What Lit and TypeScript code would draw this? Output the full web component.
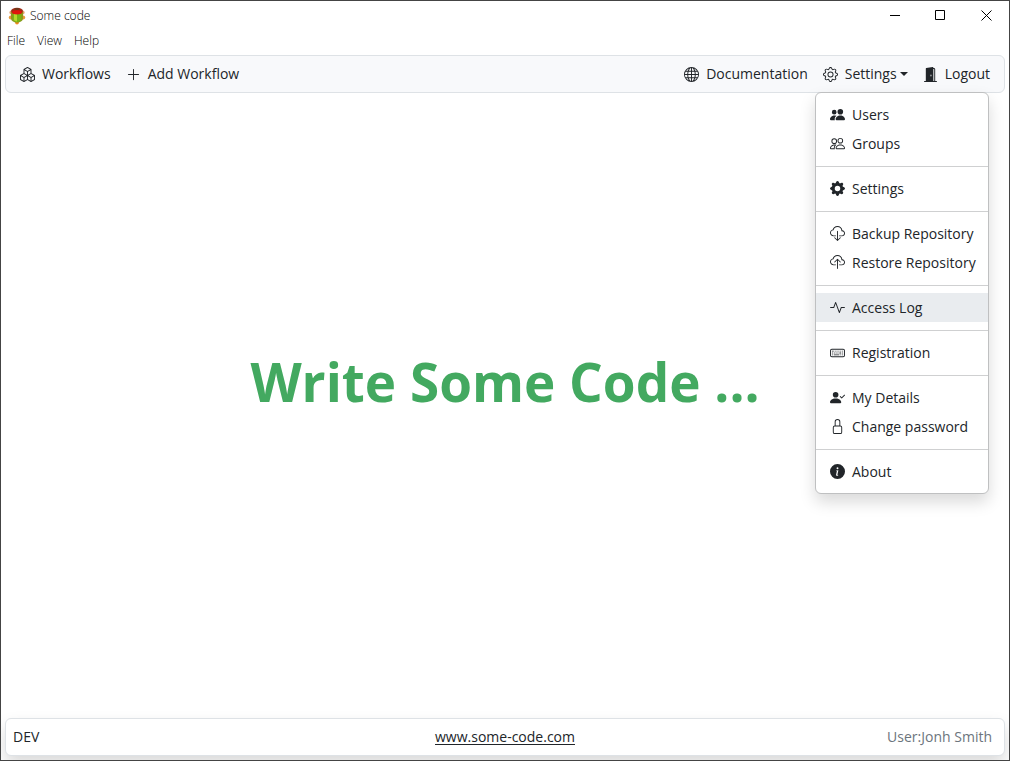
import { LitElement, html, svg, css, nothing } from "lit";
import { customElement, state } from "lit/decorators.js";
import { classMap } from "lit/directives/class-map.js";

const ICONS: Record<string, string[]> = {
  boxes: [
    "M7.752.066a.5.5 0 0 1 .496 0l3.75 2.143a.5.5 0 0 1 .252.434v3.995l3.498 2A.5.5 0 0 1 16 9.07v4.286a.5.5 0 0 1-.252.434l-3.75 2.143a.5.5 0 0 1-.496 0l-3.502-2-3.502 2.001a.5.5 0 0 1-.496 0l-3.75-2.143A.5.5 0 0 1 0 13.357V9.071a.5.5 0 0 1 .252-.434L3.75 6.638V2.643a.5.5 0 0 1 .252-.434L7.752.066ZM4.25 7.504 1.508 9.071l2.742 1.567 2.742-1.567L4.25 7.504ZM7.5 9.933l-2.75 1.571v3.134l2.75-1.571V9.933Zm1 3.134 2.75 1.571v-3.134L8.5 9.933v3.134Zm.508-3.996 2.742 1.567 2.742-1.567-2.742-1.567-2.742 1.567Zm2.242-2.433V3.504L8.5 5.076V8.21l2.75-1.572ZM7.5 8.21V5.076L4.75 3.504v3.134L7.5 8.21ZM5.258 2.643 8 4.21l2.742-1.567L8 1.076 5.258 2.643ZM15 9.933l-2.75 1.571v3.134L15 13.067V9.933ZM3.75 14.638v-3.134L1 9.933v3.134l2.75 1.571Z",
  ],
  plus: ["M8 2a.5.5 0 0 1 .5.5v5h5a.5.5 0 0 1 0 1h-5v5a.5.5 0 0 1-1 0v-5h-5a.5.5 0 0 1 0-1h5v-5A.5.5 0 0 1 8 2Z"],
  globe: [
    "M0 8a8 8 0 1 1 16 0A8 8 0 0 1 0 8zm7.5-6.923c-.67.204-1.335.82-1.887 1.855A7.97 7.97 0 0 0 5.145 4H7.5V1.077zM4.09 4a9.267 9.267 0 0 1 .64-1.539 6.7 6.7 0 0 1 .597-.933A7.025 7.025 0 0 0 2.255 4H4.09zm-.582 3.5c.03-.877.138-1.718.312-2.5H1.674a6.958 6.958 0 0 0-.656 2.5h2.49zM4.847 5a12.5 12.5 0 0 0-.338 2.5H7.5V5H4.847zM8.5 5v2.5h2.99a12.495 12.495 0 0 0-.337-2.5H8.5zM4.51 8.5a12.5 12.5 0 0 0 .337 2.5H7.5V8.5H4.51zm3.99 0V11h2.653c.187-.765.306-1.608.338-2.5H8.5zM5.145 12c.138.386.295.744.468 1.068.552 1.035 1.218 1.65 1.887 1.855V12H5.145zm.182 2.472a6.696 6.696 0 0 1-.597-.933A9.268 9.268 0 0 1 4.09 12H2.255a7.024 7.024 0 0 0 3.072 2.472zM3.82 11a13.652 13.652 0 0 1-.312-2.5h-2.49c.062.89.291 1.733.656 2.5H3.82zm6.853 3.472A7.024 7.024 0 0 0 13.745 12H11.91a9.27 9.27 0 0 1-.64 1.539 6.688 6.688 0 0 1-.597.933zM8.5 12v2.923c.67-.204 1.335-.82 1.887-1.855.173-.324.33-.682.468-1.068H8.5zm3.68-1h2.146c.365-.767.594-1.61.656-2.5h-2.49a13.65 13.65 0 0 1-.312 2.5zm2.802-3.5a6.959 6.959 0 0 0-.656-2.5H12.18c.174.782.282 1.623.312 2.5h2.49zM11.27 2.461c.247.464.462.98.64 1.539h1.835a7.024 7.024 0 0 0-3.072-2.472c.218.284.418.598.597.933zM10.855 4a7.966 7.966 0 0 0-.468-1.068C9.835 1.897 9.17 1.282 8.5 1.077V4h2.355z",
  ],
  gear: [
    "M8 4.754a3.246 3.246 0 1 0 0 6.492 3.246 3.246 0 0 0 0-6.492zM5.754 8a2.246 2.246 0 1 1 4.492 0 2.246 2.246 0 0 1-4.492 0z",
    "M9.796 1.343c-.527-1.79-3.065-1.79-3.592 0l-.094.319a.873.873 0 0 1-1.255.52l-.292-.16c-1.64-.892-3.433.902-2.54 2.541l.159.292a.873.873 0 0 1-.52 1.255l-.319.094c-1.79.527-1.79 3.065 0 3.592l.319.094a.873.873 0 0 1 .52 1.255l-.16.292c-.892 1.64.901 3.434 2.541 2.54l.292-.159a.873.873 0 0 1 1.255.52l.094.319c.527 1.79 3.065 1.79 3.592 0l.094-.319a.873.873 0 0 1 1.255-.52l.292.16c1.64.893 3.434-.902 2.54-2.541l-.159-.292a.873.873 0 0 1 .52-1.255l.319-.094c1.79-.527 1.79-3.065 0-3.592l-.319-.094a.873.873 0 0 1-.52-1.255l.16-.292c.893-1.64-.902-3.433-2.541-2.54l-.292.159a.873.873 0 0 1-1.255-.52l-.094-.319zm-2.633.283c.246-.835 1.428-.835 1.674 0l.094.319a1.873 1.873 0 0 0 2.693 1.115l.291-.16c.764-.415 1.6.42 1.184 1.185l-.159.292a1.873 1.873 0 0 0 1.116 2.692l.318.094c.835.246.835 1.428 0 1.674l-.319.094a1.873 1.873 0 0 0-1.115 2.693l.16.291c.415.764-.42 1.6-1.185 1.184l-.291-.159a1.873 1.873 0 0 0-2.693 1.116l-.094.318c-.246.835-1.428.835-1.674 0l-.094-.319a1.873 1.873 0 0 0-2.692-1.115l-.292.16c-.764.415-1.6-.42-1.184-1.185l.159-.291A1.873 1.873 0 0 0 1.945 8.93l-.319-.094c-.835-.246-.835-1.428 0-1.674l.319-.094A1.873 1.873 0 0 0 3.06 4.377l-.16-.292c-.415-.764.42-1.6 1.185-1.184l.292.159a1.873 1.873 0 0 0 2.692-1.115l.094-.319z",
  ],
  door: [
    "M1.5 15a.5.5 0 0 0 0 1h13a.5.5 0 0 0 0-1H13V2.5A1.5 1.5 0 0 0 11.5 1H11V.5a.5.5 0 0 0-.57-.495l-7 1A.5.5 0 0 0 3 1.5V15H1.5zM11 2h.5a.5.5 0 0 1 .5.5V15h-1V2zm-2.5 8c-.276 0-.5-.448-.5-1s.224-1 .5-1 .5.448.5 1-.224 1-.5 1z",
  ],
  peopleFill: [
    "M7 14s-1 0-1-1 1-4 5-4 5 3 5 4-1 1-1 1H7zm4-6a3 3 0 1 0 0-6 3 3 0 0 0 0 6z",
    "M5.216 14A2.238 2.238 0 0 1 5 13c0-1.355.68-2.75 1.936-3.72A6.325 6.325 0 0 0 5 9c-4 0-5 3-5 4s1 1 1 1h4.216zM4.5 8a2.5 2.5 0 1 0 0-5 2.5 2.5 0 0 0 0 5z",
  ],
  people: [
    "M15 14s1 0 1-1-1-4-5-4-5 3-5 4 1 1 1 1h8zm-7.978-1A.261.261 0 0 1 7 12.996c.001-.264.167-1.03.76-1.72C8.312 10.629 9.282 10 11 10c1.717 0 2.687.63 3.24 1.276.593.69.758 1.457.76 1.72l-.008.002a.274.274 0 0 1-.014.002H7.022zM11 7a2 2 0 1 0 0-4 2 2 0 0 0 0 4zm3-2a3 3 0 1 1-6 0 3 3 0 0 1 6 0zM6.936 9.28a5.88 5.88 0 0 0-1.23-.247A7.35 7.35 0 0 0 5 9c-4 0-5 3-5 4 0 .667.333 1 1 1h4.216A2.238 2.238 0 0 1 5 13c0-1.01.377-2.042 1.09-2.904.243-.294.526-.569.846-.816zM4.92 10A5.493 5.493 0 0 0 4 13H1c0-.26.164-1.03.76-1.724.545-.636 1.492-1.256 3.16-1.275zM1.5 5.5a3 3 0 1 1 6 0 3 3 0 0 1-6 0zm3-2a2 2 0 1 0 0 4 2 2 0 0 0 0-4z",
  ],
  gearFill: [
    "M9.405 1.05c-.413-1.4-2.397-1.4-2.81 0l-.1.34a1.464 1.464 0 0 1-2.105.872l-.31-.17c-1.283-.698-2.686.705-1.987 1.987l.169.311c.446.82.023 1.841-.872 2.105l-.34.1c-1.4.413-1.4 2.397 0 2.81l.34.1a1.464 1.464 0 0 1 .872 2.105l-.17.31c-.698 1.283.705 2.686 1.987 1.987l.311-.169a1.464 1.464 0 0 1 2.105.872l.1.34c.413 1.4 2.397 1.4 2.81 0l.1-.34a1.464 1.464 0 0 1 2.105-.872l.31.17c1.283.698 2.686-.705 1.987-1.987l-.169-.311a1.464 1.464 0 0 1 .872-2.105l.34-.1c1.4-.413 1.4-2.397 0-2.81l-.34-.1a1.464 1.464 0 0 1-.872-2.105l.17-.31c.698-1.283-.705-2.686-1.987-1.987l-.311.169a1.464 1.464 0 0 1-2.105-.872l-.1-.34zM8 10.93a2.929 2.929 0 1 1 0-5.86 2.929 2.929 0 0 1 0 5.858z",
  ],
  cloudDown: [
    "M4.406 1.342A5.53 5.53 0 0 1 8 0c2.69 0 4.923 2 5.166 4.579C14.758 4.804 16 6.137 16 7.773 16 9.569 14.502 11 12.687 11H10a.5.5 0 0 1 0-1h2.688C13.979 10 15 8.988 15 7.773c0-1.216-1.02-2.228-2.313-2.228h-.5v-.5C12.188 2.825 10.328 1 8 1a4.53 4.53 0 0 0-2.941 1.1c-.757.652-1.153 1.438-1.153 2.055v.448l-.445.049C2.064 4.805 1 5.952 1 7.318 1 8.785 2.23 10 3.781 10H6a.5.5 0 0 1 0 1H3.781C1.708 11 0 9.366 0 7.318c0-1.763 1.266-3.223 2.942-3.593.143-.863.698-1.723 1.464-2.383z",
    "M7.646 15.854a.5.5 0 0 0 .708 0l3-3a.5.5 0 0 0-.708-.708L8.5 14.293V5.5a.5.5 0 0 0-1 0v8.793l-2.146-2.147a.5.5 0 0 0-.708.708l3 3z",
  ],
  cloudUp: [
    "M4.406 1.342A5.53 5.53 0 0 1 8 0c2.69 0 4.923 2 5.166 4.579C14.758 4.804 16 6.137 16 7.773 16 9.569 14.502 11 12.687 11H10a.5.5 0 0 1 0-1h2.688C13.979 10 15 8.988 15 7.773c0-1.216-1.02-2.228-2.313-2.228h-.5v-.5C12.188 2.825 10.328 1 8 1a4.53 4.53 0 0 0-2.941 1.1c-.757.652-1.153 1.438-1.153 2.055v.448l-.445.049C2.064 4.805 1 5.952 1 7.318 1 8.785 2.23 10 3.781 10H6a.5.5 0 0 1 0 1H3.781C1.708 11 0 9.366 0 7.318c0-1.763 1.266-3.223 2.942-3.593.143-.863.698-1.723 1.464-2.383z",
    "M7.646 4.146a.5.5 0 0 1 .708 0l3 3a.5.5 0 0 1-.708.708L8.5 5.707V14.5a.5.5 0 0 1-1 0V5.707L5.354 7.854a.5.5 0 1 1-.708-.708l3-3z",
  ],
  activity: [
    "M6 2a.5.5 0 0 1 .47.33L10 12.036l1.53-4.208A.5.5 0 0 1 12 7.5h3.5a.5.5 0 0 1 0 1h-3.15l-1.88 5.17a.5.5 0 0 1-.94 0L6 3.964 4.47 8.171A.5.5 0 0 1 4 8.5H.5a.5.5 0 0 1 0-1h3.15l1.88-5.17A.5.5 0 0 1 6 2Z",
  ],
  keyboard: [
    "M14 5a1 1 0 0 1 1 1v5a1 1 0 0 1-1 1H2a1 1 0 0 1-1-1V6a1 1 0 0 1 1-1h12zM2 4a2 2 0 0 0-2 2v5a2 2 0 0 0 2 2h12a2 2 0 0 0 2-2V6a2 2 0 0 0-2-2H2z",
    "M13 10.25a.25.25 0 0 1 .25-.25h.5a.25.25 0 0 1 .25.25v.5a.25.25 0 0 1-.25.25h-.5a.25.25 0 0 1-.25-.25v-.5zm0-2a.25.25 0 0 1 .25-.25h.5a.25.25 0 0 1 .25.25v.5a.25.25 0 0 1-.25.25h-.5a.25.25 0 0 1-.25-.25v-.5zm-5 0A.25.25 0 0 1 8.25 8h.5a.25.25 0 0 1 .25.25v.5a.25.25 0 0 1-.25.25h-.5A.25.25 0 0 1 8 8.75v-.5zm2 0a.25.25 0 0 1 .25-.25h1.5a.25.25 0 0 1 .25.25v.5a.25.25 0 0 1-.25.25h-1.5a.25.25 0 0 1-.25-.25v-.5zm1 2a.25.25 0 0 1 .25-.25h.5a.25.25 0 0 1 .25.25v.5a.25.25 0 0 1-.25.25h-.5a.25.25 0 0 1-.25-.25v-.5zm-5-2A.25.25 0 0 1 6.25 8h.5a.25.25 0 0 1 .25.25v.5a.25.25 0 0 1-.25.25h-.5A.25.25 0 0 1 6 8.75v-.5zm-2 0A.25.25 0 0 1 4.25 8h.5a.25.25 0 0 1 .25.25v.5a.25.25 0 0 1-.25.25h-.5A.25.25 0 0 1 4 8.75v-.5zm-2 0A.25.25 0 0 1 2.25 8h.5a.25.25 0 0 1 .25.25v.5a.25.25 0 0 1-.25.25h-.5A.25.25 0 0 1 2 8.75v-.5zm11-2a.25.25 0 0 1 .25-.25h.5a.25.25 0 0 1 .25.25v.5a.25.25 0 0 1-.25.25h-.5a.25.25 0 0 1-.25-.25v-.5zm-2 0a.25.25 0 0 1 .25-.25h.5a.25.25 0 0 1 .25.25v.5a.25.25 0 0 1-.25.25h-.5a.25.25 0 0 1-.25-.25v-.5zm-2 0A.25.25 0 0 1 9.25 6h.5a.25.25 0 0 1 .25.25v.5a.25.25 0 0 1-.25.25h-.5A.25.25 0 0 1 9 6.75v-.5zm-2 0A.25.25 0 0 1 7.25 6h.5a.25.25 0 0 1 .25.25v.5a.25.25 0 0 1-.25.25h-.5A.25.25 0 0 1 7 6.75v-.5zm-2 0A.25.25 0 0 1 5.25 6h.5a.25.25 0 0 1 .25.25v.5a.25.25 0 0 1-.25.25h-.5A.25.25 0 0 1 5 6.75v-.5zm-3 0A.25.25 0 0 1 2.25 6h1.5a.25.25 0 0 1 .25.25v.5a.25.25 0 0 1-.25.25h-1.5A.25.25 0 0 1 2 6.75v-.5zm0 4a.25.25 0 0 1 .25-.25h.5a.25.25 0 0 1 .25.25v.5a.25.25 0 0 1-.25.25h-.5a.25.25 0 0 1-.25-.25v-.5zm2 0a.25.25 0 0 1 .25-.25h5.5a.25.25 0 0 1 .25.25v.5a.25.25 0 0 1-.25.25h-5.5a.25.25 0 0 1-.25-.25v-.5z",
  ],
  personCheck: [
    "M15.854 5.146a.5.5 0 0 1 0 .708l-3 3a.5.5 0 0 1-.708 0l-1.5-1.5a.5.5 0 0 1 .708-.708L12.5 7.793l2.646-2.647a.5.5 0 0 1 .708 0z",
    "M1 14s-1 0-1-1 1-4 6-4 6 3 6 4-1 1-1 1H1zm5-6a3 3 0 1 0 0-6 3 3 0 0 0 0 6z",
  ],
  lock: [
    "M8 1a2 2 0 0 1 2 2v4H6V3a2 2 0 0 1 2-2zm3 6V3a3 3 0 0 0-6 0v4a2 2 0 0 0-2 2v5a2 2 0 0 0 2 2h6a2 2 0 0 0 2-2V9a2 2 0 0 0-2-2zM5 8h6a1 1 0 0 1 1 1v5a1 1 0 0 1-1 1H5a1 1 0 0 1-1-1V9a1 1 0 0 1 1-1z",
  ],
  info: [
    "M8 16A8 8 0 1 0 8 0a8 8 0 0 0 0 16zm.93-9.412-1 4.705c-.07.34.029.533.304.533.194 0 .487-.07.686-.246l-.088.416c-.287.346-.92.598-1.465.598-.703 0-1.002-.422-.808-1.319l.738-3.468c.064-.293.006-.399-.287-.47l-.451-.081.082-.381 2.29-.287zM8 5.5a1 1 0 1 1 0-2 1 1 0 0 1 0 2z",
  ],
};

const icon = (name: string) => html`<svg class="icon" viewBox="0 0 16 16" aria-hidden="true">
  ${ICONS[name].map((d) => svg`<path fill-rule="evenodd" d=${d} />`)}
</svg>`;

interface Entry {
  icon: string;
  label: string;
}

const SETTINGS_MENU: Entry[][] = [
  [
    { icon: "peopleFill", label: "Users" },
    { icon: "people", label: "Groups" },
  ],
  [{ icon: "gearFill", label: "Settings" }],
  [
    { icon: "cloudDown", label: "Backup Repository" },
    { icon: "cloudUp", label: "Restore Repository" },
  ],
  [{ icon: "activity", label: "Access Log" }],
  [{ icon: "keyboard", label: "Registration" }],
  [
    { icon: "personCheck", label: "My Details" },
    { icon: "lock", label: "Change password" },
  ],
  [{ icon: "info", label: "About" }],
];

@customElement("app-root")
export class AppRoot extends LitElement {
  @state() private open = true;
  @state() private active = "Access Log";

  static styles = css`
    :host {
      display: block;
      font-family: "Segoe UI", "Open Sans", "Noto Sans", sans-serif;
      font-size: 14px;
      font-weight: 400;
      line-height: 20px;
      color: #212529;
    }
    * {
      box-sizing: border-box;
    }
    button {
      font: inherit;
      color: inherit;
      background: none;
      border: 0;
      padding: 0;
      margin: 0;
      text-align: left;
    }
    a {
      color: inherit;
      text-decoration: none;
    }
    .window {
      display: flex;
      flex-direction: column;
      min-height: 100vh;
      border: 1px solid #444;
      background: #fff;
      overflow: hidden;
    }
    .titlebar,
    .menubar {
      font-size: 12px;
      font-weight: 350;
      color: #000;
    }
    .titlebar {
      display: flex;
      align-items: center;
      height: 29px;
      padding-left: 7px;
      gap: 4px;
    }
    .logo {
      width: 18px;
      height: 18px;
    }
    .title {
      flex: 1;
    }
    .caption {
      display: flex;
      align-self: stretch;
    }
    .caption button {
      display: grid;
      place-items: center;
      width: 46px;
    }
    .caption svg {
      width: 11px;
      height: 11px;
      fill: none;
      stroke: #000;
    }
    .menubar {
      display: flex;
      gap: 12px;
      padding: 0 6px;
      height: 21px;
    }
    .navbar {
      position: relative;
      display: flex;
      align-items: center;
      justify-content: space-between;
      margin: 4px 4px 0;
      height: 38px;
      padding: 0 14px;
      border: 1px solid #dee2e6;
      border-radius: 6px;
      background: #f8f9fb;
    }
    .group {
      display: flex;
      gap: 15px;
    }
    .nav-item,
    .entry {
      display: flex;
      align-items: center;
      gap: 7px;
      white-space: nowrap;
    }
    .icon {
      flex: none;
      width: 15px;
      height: 15px;
      fill: currentColor;
    }
    .toggle::after {
      content: "";
      margin-left: -4px;
      border-top: 4px solid;
      border-left: 4px solid transparent;
      border-right: 4px solid transparent;
    }
    .dropdown {
      position: absolute;
      z-index: 1;
      top: 36px;
      right: 15px;
      min-width: 174px;
      padding: 7px 0;
      border: 1px solid #bfc0c1;
      border-radius: 6px;
      background: #fff;
      box-shadow: 0 8px 16px rgba(0, 0, 0, 0.15);
    }
    .entry {
      width: 100%;
      height: 29px;
      padding: 0 12px 0 14px;
    }
    .entry.active {
      background: #e9ecef;
    }
    .divider {
      height: 1px;
      margin: 8px 0 7px;
      border: 0;
      background: #cfd0d1;
    }
    .content {
      flex: 1;
      display: grid;
      place-items: center;
      padding-bottom: 48px;
    }
    h1 {
      margin: 0;
      font-size: 53px;
      line-height: 64px;
      font-weight: 700;
      color: #43a960;
    }
    .footer {
      display: grid;
      grid-template-columns: 1fr auto 1fr;
      align-items: center;
      height: 38px;
      margin: 0 4px 4px;
      padding: 0 7px;
      border: 1px solid #dee2e6;
      border-radius: 6px;
      background: #fff;
      box-shadow: 0 8px 16px rgba(0, 0, 0, 0.15);
    }
    .site {
      text-decoration: underline;
      text-underline-offset: 2px;
    }
    .user {
      padding-right: 5px;
      text-align: right;
      color: #6c757d;
    }
  `;

  private renderMenu() {
    return html`<div class="dropdown" id="settings-menu">
      ${SETTINGS_MENU.map(
        (group, i) => html`${i ? html`<hr class="divider" />` : nothing}
          ${group.map(
            (e) => html`<button
              class=${classMap({ entry: true, active: e.label === this.active })}
              @mouseenter=${() => (this.active = e.label)}
            >
              ${icon(e.icon)}<span>${e.label}</span>
            </button>`
          )}`
      )}
    </div>`;
  }

  render() {
    return html`<div class="window">
      <header class="titlebar">
        <svg class="logo" viewBox="0 0 18 18" aria-hidden="true">
          <circle cx="3.4" cy="5.6" r="2" fill="#e0a070" />
          <circle cx="14.6" cy="5.6" r="2" fill="#e0a070" />
          <circle cx="2.8" cy="10.6" r="2" fill="#e39a3c" />
          <circle cx="15.2" cy="10.6" r="2" fill="#e39a3c" />
          <circle cx="9" cy="15.6" r="1.9" fill="#f0871e" />
          <path d="M3 5h12v6.500c0 2-2.500 4-6 4s-6-2-6-4z" fill="#8a9a1c" />
          <path d="M5 6h8v6.500c0 1.500-2 2.500-4 2.500s-4-1-4-2.500z" fill="#76b516" />
          <path d="M6 7h3v7.500c-1.500 0-3-1-3-2z" fill="#b4d92a" />
          <ellipse cx="9" cy="4" rx="6" ry="3.2" fill="#9c2a14" />
          <ellipse cx="9" cy="5.2" rx="5" ry="2" fill="#e0150c" />
          <ellipse cx="9" cy="2" rx="2.4" ry="1.1" fill="#6a3a1c" />
        </svg>
        <span class="title">Some code</span>
        <div class="caption">
          <button aria-label="Minimize"><svg viewBox="0 0 11 11"><path d="M1 5.5h10" /></svg></button>
          <button aria-label="Maximize"><svg viewBox="0 0 11 11"><path d="M.5.5h9v9h-9z" /></svg></button>
          <button aria-label="Close"><svg viewBox="0 0 11 11"><path d="M.5.5l10 10M10.500.5l-10 10" /></svg></button>
        </div>
      </header>
      <div class="menubar">
        <button>File</button><button>View</button><button>Help</button>
      </div>
      <nav class="navbar">
        <div class="group">
          <a class="nav-item" href="#workflows">${icon("boxes")}<span>Workflows</span></a>
          <a class="nav-item" href="#add">${icon("plus")}<span>Add Workflow</span></a>
        </div>
        <div class="group">
          <a class="nav-item" href="#docs">${icon("globe")}<span>Documentation</span></a>
          <button
            class="nav-item toggle"
            aria-expanded=${this.open ? "true" : "false"}
            aria-controls="settings-menu"
            @click=${() => (this.open = !this.open)}
          >
            ${icon("gear")}<span>Settings</span>
          </button>
          <a class="nav-item" href="#logout">${icon("door")}<span>Logout</span></a>
        </div>
        ${this.open ? this.renderMenu() : nothing}
      </nav>
      <main class="content"><h1>Write Some Code ...</h1></main>
      <footer class="footer">
        <span>DEV</span>
        <a class="site" href="#site">www.some-code.com</a>
        <span class="user">User:Jonh Smith</span>
      </footer>
    </div>`;
  }
}
